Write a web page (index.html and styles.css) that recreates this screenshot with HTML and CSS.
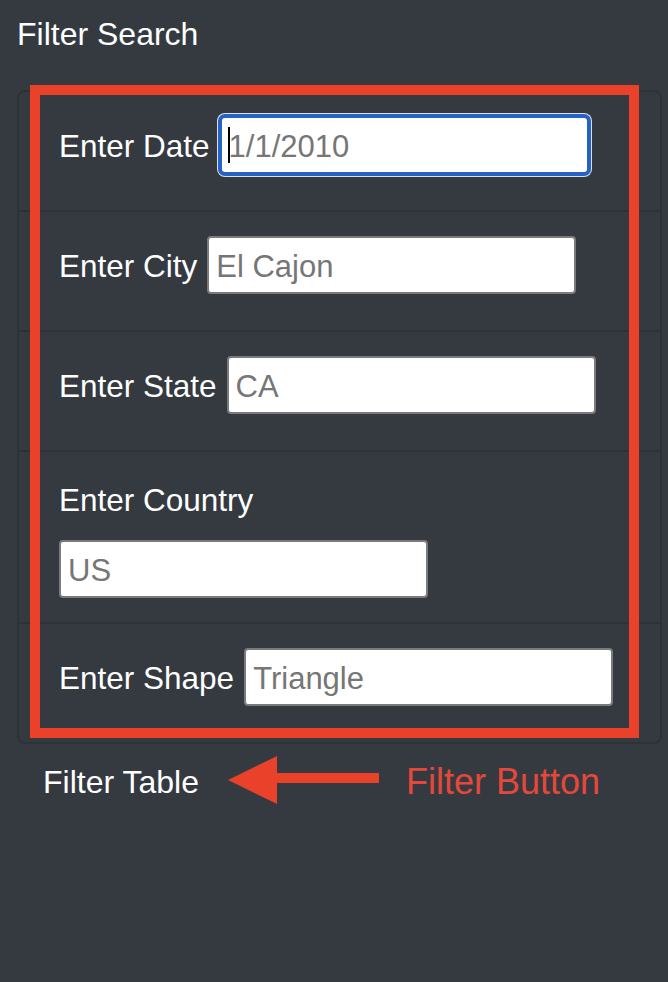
FILE: index.html
```html
<!DOCTYPE html>
<html lang="en">
<head>
<meta charset="utf-8">
<title>Filter Search</title>
<link rel="stylesheet" href="styles.css">
</head>
<body>
  <main class="page">
    <h1 class="title">Filter Search</h1>
    <div class="card">
      <ul class="list">
        <li class="item">
          <div class="row">
            <label class="label" for="date">Enter Date</label>
            <span class="field"><input class="input is-focused" id="date" type="text" placeholder="1/1/2010"></span>
          </div>
        </li>
        <li class="item">
          <div class="row">
            <label class="label" for="city">Enter City</label>
            <input class="input" id="city" type="text" placeholder="El Cajon">
          </div>
        </li>
        <li class="item">
          <div class="row">
            <label class="label" for="state">Enter State</label>
            <input class="input" id="state" type="text" placeholder="CA">
          </div>
        </li>
        <li class="item">
          <label class="label label-block" for="country">Enter Country</label>
          <input class="input" id="country" type="text" placeholder="US">
        </li>
        <li class="item">
          <div class="row">
            <label class="label" for="shape">Enter Shape</label>
            <input class="input" id="shape" type="text" placeholder="Triangle">
          </div>
        </li>
      </ul>
      <div class="highlight" aria-hidden="true"></div>
    </div>
    <div class="actions">
      <button class="btn" type="button">Filter Table</button>
      <svg class="arrow" width="151" height="50" viewBox="0 0 151 50" aria-hidden="true">
        <polygon points="0,25 49,1 49,49" fill="#e9412a"/>
        <rect x="47" y="18" width="104" height="10" fill="#e9412a"/>
      </svg>
      <span class="note">Filter Button</span>
    </div>
  </main>
</body>
</html>
```
FILE: styles.css
```css
html, body {
  margin: 0;
  padding: 0;
  background: #343a40;
  min-height: 100%;
}

body {
  font-family: "Liberation Sans", Arial, sans-serif;
  color: #fff;
  min-height: 982px;
}

.page {
  padding: 10px 6px 0 17px;
}

.title {
  margin: 0 0 32px 0;
  font-size: 32px;
  line-height: 48px;
  font-weight: 400;
  color: #fff;
}

.card {
  position: relative;
  border: 2px solid #2d3237;
  border-radius: 8px;
}

.list {
  list-style: none;
  margin: 0;
  padding: 0;
}

.item {
  padding: 24px 40px;
  border-top: 2px solid #2d3237;
}

.item:first-child {
  border-top: 0;
}

.row {
  display: flex;
  align-items: baseline;
  gap: 10px;
  height: 70px;
}

.label {
  font-size: 31.5px;
  line-height: 48px;
  color: #fff;
}

.label-block {
  display: block;
  margin-bottom: 16px;
}

.field {
  position: relative;
  display: inline-block;
}

.field::after {
  content: "";
  position: absolute;
  left: 8px;
  top: 11px;
  width: 2px;
  height: 36px;
  background: #000;
}

.input {
  box-sizing: border-box;
  width: 369px;
  height: 58px;
  margin: 0;
  padding: 3px 7px 0;
  border: 2px solid #7b7b7b;
  border-radius: 4px;
  background: #fff;
  font-family: "Liberation Sans", Arial, sans-serif;
  font-size: 31px;
  color: #333;
  outline: none;
  display: block;
}

.input::placeholder {
  color: #767676;
  opacity: 1;
}

.input.is-focused {
  border-color: #2462c8;
  border-radius: 5px;
  box-shadow: 0 0 0 2px #2462c8, 0 0 0 3px rgba(255, 255, 255, 0.85);
}

.highlight {
  position: absolute;
  left: 11px;
  top: -7px;
  width: 609px;
  height: 653px;
  box-sizing: border-box;
  border: 10px solid #e9412a;
  pointer-events: none;
}

.actions {
  display: flex;
  align-items: center;
}

.btn {
  margin: 0;
  padding: 14px 26px 10px;
  border: 0;
  background: transparent;
  color: #fff;
  font-family: "Liberation Sans", Arial, sans-serif;
  font-size: 32px;
  line-height: 48px;
  cursor: pointer;
}

.arrow {
  display: block;
  margin-left: 3px;
  flex: none;
}

.note {
  margin-left: 27px;
  padding-top: 4px;
  font-size: 36px;
  line-height: 48px;
  color: #e5483a;
}
```
